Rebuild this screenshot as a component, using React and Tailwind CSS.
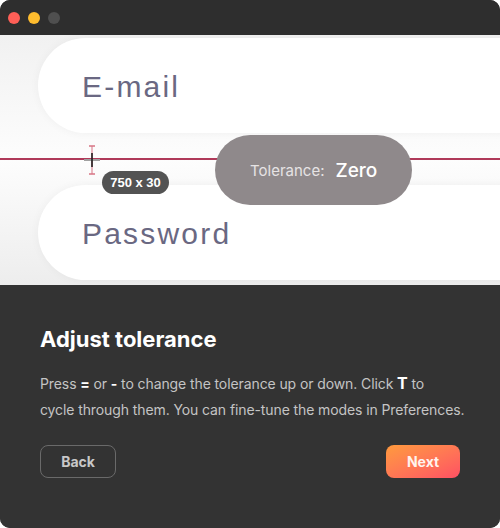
import React from "react";

export default function App() {
  return (
    <div className="w-[500px] h-[528px] bg-white">
      <div className="w-[500px] h-[528px] rounded-[10px] overflow-hidden flex flex-col bg-[#333333]">
        {/* Title bar */}
        <div className="h-[35px] bg-[#2e2e2e] flex items-center gap-[8px] pl-[8px] shrink-0">
          <div className="w-[12px] h-[12px] rounded-full bg-[#fe5f57]" />
          <div className="w-[12px] h-[12px] rounded-full bg-[#febc2e]" />
          <div className="w-[12px] h-[12px] rounded-full bg-[#4f4f4f]" />
        </div>

        {/* Preview area */}
        <div className="relative h-[250px] shrink-0 overflow-hidden bg-gradient-to-b from-[#f1f1f1] via-[#fdfdfd] to-[#ededed]">
          <div className="flex flex-col gap-[52px] pt-[3px] pl-[38px]">
            <div className="h-[95px] w-[560px] rounded-full bg-white shadow-[0_0_10px_rgba(0,0,0,0.045)] flex items-center pl-[44px]">
              <span className="mt-[3px] text-[30px] tracking-[2.2px] text-[#6a6882] font-['Liberation_Sans',Arial,sans-serif] leading-none">
                E-mail
              </span>
            </div>
            <div className="h-[95px] w-[560px] rounded-full bg-white shadow-[0_0_10px_rgba(0,0,0,0.045)] flex items-center pl-[44px]">
              <span className="mt-[3px] text-[30px] tracking-[2.2px] text-[#6a6882] font-['Liberation_Sans',Arial,sans-serif] leading-none">
                Password
              </span>
            </div>
          </div>

          {/* red guide line */}
          <div className="absolute left-0 right-0 top-[123px] h-[2px] bg-[#b03a5a]" />

          {/* crosshair */}
          <svg className="absolute left-[82px] top-[109px]" width="20" height="32" viewBox="0 0 20 32">
            <line x1="10" y1="2" x2="10" y2="30" stroke="#d77585" strokeWidth="1" />
            <line x1="7" y1="2" x2="13" y2="2" stroke="#d77585" strokeWidth="1.5" />
            <line x1="7" y1="30" x2="13" y2="30" stroke="#d77585" strokeWidth="1.5" />
            <line x1="2" y1="16" x2="18" y2="16" stroke="#a0a0a0" strokeWidth="2" />
            <line x1="10" y1="9" x2="10" y2="23" stroke="#111" strokeWidth="1.5" />
          </svg>

          {/* size badge */}
          <div className="absolute left-[102px] top-[136px] h-[23px] w-[67px] rounded-full bg-[#535353] flex items-center justify-center">
            <span className="text-[13px] font-bold text-white font-['Liberation_Sans',Arial,sans-serif] leading-none">750 x 30</span>
          </div>

          {/* tolerance pill */}
          <div className="absolute left-[215px] top-[100px] w-[197px] h-[70px] rounded-full bg-[#8f898b] flex items-center pl-[35px] gap-[11px]">
            <span className="text-[15px] text-[#e6e3e4] font-['Inter',sans-serif] leading-none">Tolerance:</span>
            <span className="text-[19px] font-medium text-white font-['Inter',sans-serif] leading-none">Zero</span>
          </div>
        </div>

        {/* Bottom panel */}
        <div className="flex-1 bg-[#333333] px-[40px] pt-[40px] font-['Inter',sans-serif]">
          <h1 className="text-[22px] font-bold text-white leading-[28px]">Adjust tolerance</h1>
          <p className="mt-[18px] text-[14px] leading-[26px] tracking-[-0.1px] text-[#c4c4c4] whitespace-nowrap">
            Press <b className="text-white font-bold">=</b> or <b className="text-white font-bold">-</b> to change the tolerance up or down. Click{" "}
            <b className="text-white font-bold text-[16px] leading-none">T</b> to
            <br />
            cycle through them. You can fine-tune the modes in Preferences.
          </p>
          <div className="mt-[22px] flex justify-between items-center">
            <button className="w-[76px] h-[33px] rounded-[8px] border border-[#6a6a6a] text-[14px] font-bold text-[#c8c8c8]">
              Back
            </button>
            <button className="w-[74px] h-[33px] rounded-[8px] bg-gradient-to-br from-[#ff9a3c] to-[#ff4f62] text-[14px] font-bold text-[#fff3ef]">
              Next
            </button>
          </div>
        </div>
      </div>
    </div>
  );
}
